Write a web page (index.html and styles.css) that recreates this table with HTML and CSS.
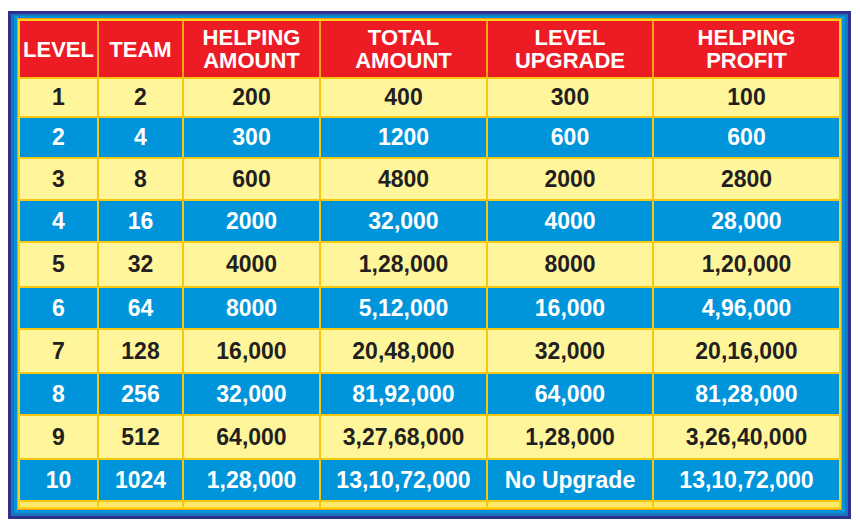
FILE: index.html
```html
<!DOCTYPE html>
<html>
<head>
<meta charset="utf-8">
<link rel="stylesheet" href="styles.css">
</head>
<body>
<div class="f1"><div class="f2"><div class="f3"><div class="f4"><div class="f5">
<div class="tbl">
  <div class="row head"><div>LEVEL</div><div>TEAM</div><div>HELPING<br>AMOUNT</div><div>TOTAL<br>AMOUNT</div><div>LEVEL<br>UPGRADE</div><div>HELPING<br>PROFIT</div></div>
  <div class="row y h37"><div>1</div><div>2</div><div>200</div><div>400</div><div>300</div><div>100</div></div>
  <div class="row b h39"><div>2</div><div>4</div><div>300</div><div>1200</div><div>600</div><div>600</div></div>
  <div class="row y h40"><div>3</div><div>8</div><div>600</div><div>4800</div><div>2000</div><div>2800</div></div>
  <div class="row b h40"><div>4</div><div>16</div><div>2000</div><div>32,000</div><div>4000</div><div>28,000</div></div>
  <div class="row y h43"><div>5</div><div>32</div><div>4000</div><div>1,28,000</div><div>8000</div><div>1,20,000</div></div>
  <div class="row b h40"><div>6</div><div>64</div><div>8000</div><div>5,12,000</div><div>16,000</div><div>4,96,000</div></div>
  <div class="row y h42"><div>7</div><div>128</div><div>16,000</div><div>20,48,000</div><div>32,000</div><div>20,16,000</div></div>
  <div class="row b h40"><div>8</div><div>256</div><div>32,000</div><div>81,92,000</div><div>64,000</div><div>81,28,000</div></div>
  <div class="row y h42"><div>9</div><div>512</div><div>64,000</div><div>3,27,68,000</div><div>1,28,000</div><div>3,26,40,000</div></div>
  <div class="row b h40"><div>10</div><div>1024</div><div>1,28,000</div><div>13,10,72,000</div><div>No Upgrade</div><div>13,10,72,000</div></div>
  <div class="row y strip"><div></div><div></div><div></div><div></div><div></div><div></div></div>
</div>
</div></div></div></div></div>
</body>
</html>
```
FILE: styles.css
```css
html, body {
  margin: 0;
  padding: 0;
  background: #ffffff;
}
body {
  padding: 11px 0 0 8px;
  font-family: "Liberation Sans", Arial, sans-serif;
  font-weight: bold;
}
.f1 {
  width: 843px;
  box-sizing: border-box;
  border: 3px solid #2e3192;
}
.f2 { border: 3px solid #1c75bc; border-top-width: 2px; }
.f3 { border: 3px solid #0095da; border-top-width: 2px; }
.f4 { border: 1px solid #f7941d; }
.f5 { border: 2px solid #fcd116; }
.tbl {
  display: flex;
  flex-direction: column;
  gap: 2px;
  background: #f9c80e;
}
.row {
  display: grid;
  grid-template-columns: 77px 83px 135px 165px 164px 185px;
  column-gap: 2px;
  background: #f9c80e;
}
.row > div {
  display: flex;
  align-items: center;
  justify-content: center;
  text-align: center;
  font-size: 23px;
}
.head {
  height: 56px;
  background: #f7a21b;
}
.head > div {
  background: #ed1c24;
  color: #ffffff;
  font-size: 22px;
  line-height: 23px;
}
.y > div {
  background: #fff59b;
  color: #231f20;
}
.b > div {
  background: #0095da;
  color: #ffffff;
}
.h37 { height: 37px; }
.h39 { height: 39px; }
.h40 { height: 40px; }
.h42 { height: 42px; }
.h43 { height: 43px; }
.strip { height: 5px; }
.strip > div { background: #fdea6e; }
```
